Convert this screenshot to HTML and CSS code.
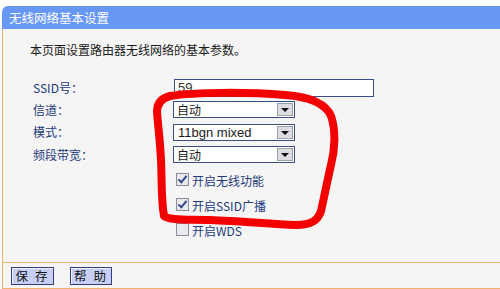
FILE: index.html
```html
<!DOCTYPE html>
<html lang="zh">
<head>
<meta charset="utf-8">
<link rel="stylesheet" href="styles.css">
</head>
<body>
<div class="page">
  <div class="panel">
    <div class="title">无线网络基本设置</div>
    <div class="content">
      <p class="desc">本页面设置路由器无线网络的基本参数。</p>
      <div class="form">
        <div class="row r1"><span class="lbl">SSID号：</span><div class="input">59</div></div>
        <div class="row r2"><span class="lbl">信道：</span><div class="select"><span class="val">自动</span><span class="arrow"></span></div></div>
        <div class="row r3"><span class="lbl">模式：</span><div class="select"><span class="val latin">11bgn mixed</span><span class="arrow"></span></div></div>
        <div class="row r4"><span class="lbl">频段带宽：</span><div class="select"><span class="val">自动</span><span class="arrow"></span></div></div>
        <div class="check first"><span class="box on"></span><span class="ctext">开启无线功能</span></div>
        <div class="check"><span class="box on"></span><span class="ctext">开启SSID广播</span></div>
        <div class="check"><span class="box"></span><span class="ctext">开启WDS</span></div>
      </div>
    </div>
    <div class="actions">
      <button class="btn">保 存</button>
      <button class="btn">帮 助</button>
    </div>
  </div>
  <svg class="mark" width="500" height="289" viewBox="0 0 500 289">
    <path d="M170 96 C 195 92, 250 92, 285 95 C 312 97, 326 104, 331 116 C 336 130, 335 150, 331 165 C 327 182, 324 198, 321 211 C 318 221, 310 225, 296 225 C 270 224, 240 221, 210 220 C 190 219, 170 221, 164 216 C 161 200, 162 180, 161 160 C 160 140, 158 125, 157 112 C 157 103, 162 98, 170 96 Z" fill="none" stroke="#f40000" stroke-width="8" stroke-linecap="round" stroke-linejoin="round"/>
  </svg>
</div>
</body>
</html>
```
FILE: styles.css
```css
html, body {
  margin: 0;
  padding: 0;
  background: #ffffff;
}
body {
  font-family: "Noto Sans CJK SC", "Liberation Sans", sans-serif;
  font-size: 12px;
}
.page {
  position: relative;
  width: 500px;
  height: 289px;
  padding-top: 6px;
  box-sizing: border-box;
  overflow: hidden;
}
.panel {
  margin-left: 2px;
}
.title {
  height: 23px;
  line-height: 23px;
  background: #6898f6;
  color: #ffffff;
  font-size: 12.5px;
  padding-left: 7px;
  border-radius: 6px 0 0 0;
}
.content {
  height: 233px;
  box-sizing: border-box;
  background: #f5f5f5;
  border-left: 1px solid #f0b070;
  padding-top: 13px;
}
.desc {
  margin: 0 0 19px 27px;
  line-height: 16px;
  color: #1a1a1a;
  font-size: 12px;
}
.form {
  padding-left: 30px;
  display: flex;
  flex-direction: column;
}
.row {
  display: flex;
  align-items: center;
}
.r1 { height: 21px; }
.r2 { height: 23px; }
.r3 { height: 22px; }
.r4 { height: 23px; }
.lbl {
  width: 140px;
  color: #1d3a80;
  font-size: 12px;
  line-height: 16px;
}
.input {
  margin-left: 1px;
  width: 200px;
  height: 18px;
  box-sizing: border-box;
  border: 1px solid #3c4c8e;
  background: #ffffff;
  font-family: "Liberation Sans", sans-serif;
  font-size: 13px;
  line-height: 16px;
  padding-left: 3px;
  color: #333;
}
.select {
  width: 122px;
  height: 17px;
  box-sizing: border-box;
  border: 1px solid #3e4c84;
  background: #ffffff;
  display: flex;
  align-items: stretch;
  justify-content: space-between;
}
.val {
  padding-left: 3px;
  line-height: 15px;
  font-size: 12px;
  color: #1a1a1a;
}
.val.latin {
  font-family: "Liberation Sans", sans-serif;
  font-size: 13px;
  padding-left: 4px;
}
.arrow {
  width: 16px;
  margin: 1px;
  box-sizing: border-box;
  border: 1px solid #9aa0b0;
  background: #dcdde2;
  display: flex;
  align-items: center;
  justify-content: center;
}
.arrow::after {
  content: "";
  border-left: 4px solid transparent;
  border-right: 4px solid transparent;
  border-top: 4px solid #111;
  margin-top: 1px;
}
.check {
  margin-left: 143px;
  height: 25px;
  display: flex;
  align-items: center;
}
.check.first {
  margin-top: 2px;
}
.box {
  width: 13px;
  height: 13px;
  box-sizing: border-box;
  border: 1px solid #8a8f9c;
  background: #e9eaee;
  position: relative;
  margin-right: 3px;
  margin-bottom: 3px;
}
.box.on::after {
  content: "";
  position: absolute;
  left: 3px;
  top: 0px;
  width: 3px;
  height: 7px;
  border-right: 2px solid #3a4a8a;
  border-bottom: 2px solid #3a4a8a;
  transform: rotate(40deg);
}
.ctext {
  color: #1d3a80;
  font-size: 12px;
  line-height: 16px;
}
.actions {
  height: 25px;
  box-sizing: content-box;
  background: #f5f5f5;
  border-left: 1px solid #f0b070;
  border-top: 1px solid #f0b070;
  border-bottom: 1px solid #f0b070;
  display: flex;
  align-items: center;
  gap: 16px;
  padding-left: 8px;
}
.btn {
  width: 43px;
  height: 18px;
  padding: 0;
  margin: 0;
  box-sizing: border-box;
  border: 1px solid #353c80;
  background: #c8cff6;
  box-shadow: inset 1px 1px 0 #eef0ff;
  font-family: "Noto Sans CJK SC", sans-serif;
  font-size: 12.5px;
  line-height: 16px;
  letter-spacing: 2px;
  color: #111;
}
.btn + .btn {
  width: 42px;
}
.mark {
  position: absolute;
  left: 0;
  top: 0;
  pointer-events: none;
}
```
